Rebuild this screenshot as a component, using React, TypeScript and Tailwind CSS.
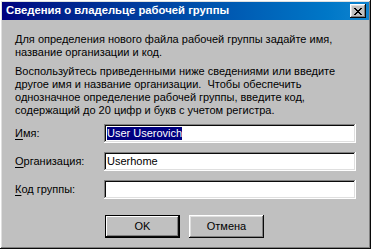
const raised =
  "shadow-[inset_-1px_-1px_#0a0a0a,inset_1px_1px_#ffffff,inset_-2px_-2px_#808080,inset_2px_2px_#dfdfdf]";
const sunken =
  "shadow-[inset_-1px_-1px_#ffffff,inset_1px_1px_#808080,inset_-2px_-2px_#dfdfdf,inset_2px_2px_#0a0a0a]";

function Field({
  label,
  hot,
  value,
  selected,
}: {
  label: string;
  hot: string;
  value?: string;
  selected?: boolean;
}) {
  return (
    <div className="flex h-[19px] items-center">
      <label className="w-[89px] text-[11px] leading-[13px]">
        <span className="underline underline-offset-[2px]">{hot}</span>
        {label}
      </label>
      <div className={`flex h-[19px] w-[252px] items-center bg-white px-[3px] ${sunken}`}>
        {value ? (
          <span
            className={`text-[11px] leading-[13px] ${
              selected ? "bg-[#000080] text-white" : "text-black"
            }`}
          >
            {value}
          </span>
        ) : null}
      </div>
    </div>
  );
}

function Button({ children, primary }: { children: string; primary?: boolean }) {
  return (
    <button
      type="button"
      className={`h-[23px] w-[75px] bg-[#c0c0c0] text-[11px] text-black ${
        primary
          ? "border border-black shadow-[inset_-1px_-1px_#0a0a0a,inset_1px_1px_#ffffff,inset_-2px_-2px_#808080]"
          : raised
      }`}
    >
      {children}
    </button>
  );
}

export default function App() {
  return (
    <div
      className={`flex h-[249px] w-[371px] flex-col bg-[#c0c0c0] p-[2px] text-black ${raised}`}
      style={{ fontFamily: '"Liberation Sans", Arial, sans-serif' }}
    >
      <div className="flex h-[18px] items-center justify-between bg-linear-to-r from-[#000080] to-[#1084d0] pl-[4px] pr-[3px]">
        <span className="text-[11.3px] font-bold leading-none text-white">
          Сведения о владельце рабочей группы
        </span>
        <button
          type="button"
          className={`flex h-[14px] w-[16px] items-center justify-center bg-[#c0c0c0] ${raised}`}
        >
          <svg width="8" height="7" viewBox="0 0 8 7" shapeRendering="crispEdges">
            <path
              d="M0 0h2v1H0zM6 0h2v1H6zM1 1h2v1H1zM5 1h2v1H5zM2 2h4v1H2zM3 3h2v1H3zM2 4h4v1H2zM1 5h2v1H1zM5 5h2v1H5zM0 6h2v1H0zM6 6h2v1H6z"
              fill="#000"
            />
          </svg>
        </button>
      </div>

      <div className="flex flex-col px-[13px] pt-[13px]">
        <p className="text-[11px] leading-[13px]">
          Для определения нового файла рабочей группы задайте имя,
          <br />
          название организации и код.
        </p>
        <p className="mt-[6px] text-[11px] leading-[13px]">
          Воспользуйтесь приведенными ниже сведениями или введите
          <br />
          другое имя и название организации.&nbsp; Чтобы обеспечить
          <br />
          однозначное определение рабочей группы, введите код,
          <br />
          содержащий до 20 цифр и букв с учетом регистра.
        </p>

        <div className="mt-[7px] flex flex-col gap-[9px]">
          <Field hot="И" label="мя:" value="User Userovich" selected />
          <Field hot="О" label="рганизация:" value="Userhome" />
          <Field hot="К" label="од группы:" />
        </div>

        <div className="mt-[16px] flex gap-[9px] pl-[90px]">
          <Button primary>OK</Button>
          <Button>Отмена</Button>
        </div>
      </div>
    </div>
  );
}
